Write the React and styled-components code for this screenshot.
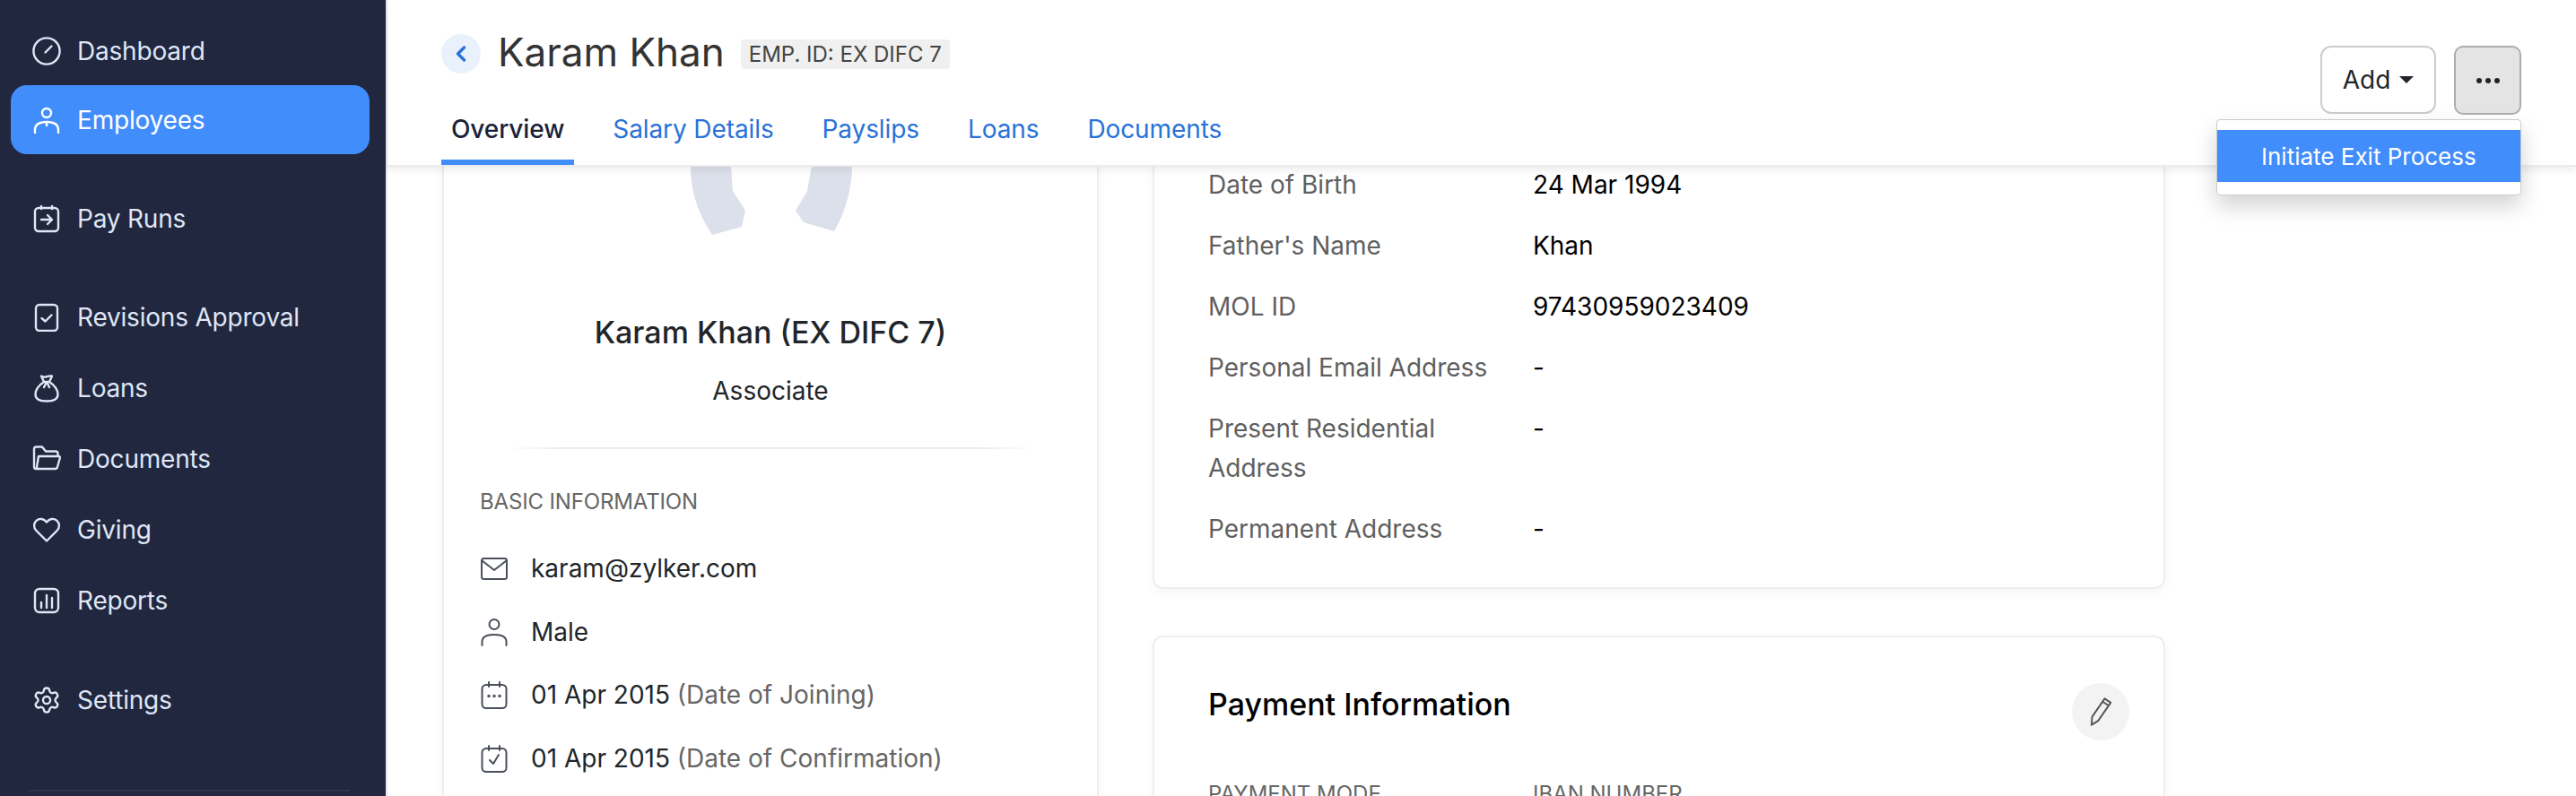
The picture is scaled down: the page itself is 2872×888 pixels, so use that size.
import React from 'react'
import styled, { createGlobalStyle } from 'styled-components'

const GlobalStyle = createGlobalStyle`
  html, body {
    margin: 0;
    padding: 0;
    background: #fff;
    font-family: Inter, "Liberation Sans", sans-serif;
    overflow: hidden;
  }
  * { box-sizing: border-box; }
`

const Icon = ({ children, size = 32, sw = 2.4 }) => (
  <svg width={size} height={size} viewBox="0 0 32 32" fill="none" stroke="currentColor" strokeWidth={sw} strokeLinecap="round" strokeLinejoin="round">
    {children}
  </svg>
)

const icons = {
  dashboard: <><circle cx="16" cy="16" r="14.6" /><path d="M14.500 17.500l7-7" /></>,
  employee: <><circle cx="16" cy="8" r="5" /><path d="M3 30v-3c0-6 5-9 13-9s13 3 13 9v3M16 18v4" /></>,
  payruns: <><rect x="3" y="4" width="26" height="26" rx="4" /><path d="M10 2v3M22 2v3M10 17h11M17 12l5 5-5 5" /></>,
  revisions: <><rect x="4" y="2" width="24" height="29" rx="4" /><path d="M10.500 17l4 3.500 7-7" /></>,
  loans: <><path d="M10 2.500c2 1.200 4 1.500 6 .7 2-.8 4-1 6-.7l-3 6.500h-6zM13 9C7 13 3.500 18 3.500 23c0 5 4 7.500 12.500 7.500S28.500 28 28.500 23c0-5-3.500-10-9.500-14M16 9l-3 6M16 9l3 6" /></>,
  documents: <><path d="M7 27H4c-1.500 0-2-1-2-2V5c0-1.500 1-2.500 2.500-2.500H11l4 5h11c1.500 0 2.500 1 2.500 2.500v2" /><path d="M7 13h22.500c1 0 1.500 1 1.300 2L28 25c-.3 1.300-1 2-2.500 2H6.500C5 27 4.500 26 5 25l2-12z" /></>,
  giving: <path d="M16 28.500L4.500 17C1 13.500 1.500 8.500 4.500 5.800 8 2.700 13 3.500 16 7.500c3-4 8-4.800 11.500-1.700 3 2.700 3.500 7.700 0 11.200z" />,
  reports: <><rect x="3" y="3" width="26" height="26" rx="5" /><path d="M10 18v6M16 10v14M22 13v11" /></>,
  settings: <g transform="translate(-0.3 -0.3) scale(1.36)" strokeWidth="1.75"><circle cx="12" cy="12" r="3" /><path d="M9.671 4.136a2.34 2.34 0 0 1 4.659 0 2.34 2.34 0 0 0 3.319 1.915 2.34 2.34 0 0 1 2.33 4.033 2.34 2.34 0 0 0 0 3.831 2.34 2.34 0 0 1-2.33 4.033 2.34 2.34 0 0 0-3.319 1.915 2.34 2.34 0 0 1-4.659 0 2.34 2.34 0 0 0-3.32-1.915 2.34 2.34 0 0 1-2.33-4.033 2.34 2.34 0 0 0 0-3.831A2.34 2.34 0 0 1 6.35 6.051a2.34 2.34 0 0 0 3.319-1.915" /></g>,
  mail: <><rect x="2" y="5" width="28" height="23" rx="2.500" /><path d="M2.500 7.500L16 18 29.500 7.500" /></>,
  user: <><circle cx="16" cy="7.500" r="5.500" /><path d="M2.500 31v-4c0-5 5-8 13.500-8s13.500 3 13.500 8v4" /></>,
  joining: <><rect x="2.500" y="5" width="27" height="26" rx="4.500" /><path d="M10 2v5M22 2v5" /><circle cx="10" cy="17.500" r=".8" /><circle cx="16" cy="17.500" r=".8" /><circle cx="22" cy="17.500" r=".8" /></>,
  confirm: <><rect x="2.500" y="5" width="27" height="26" rx="4.500" /><path d="M10 2v5M22 2v5M11 18l4 4 6-10" /></>,
  pencil: <path d="M7 29l.6-8L20 3l6 4-12.500 18zM18 6l6 4" />
}

const nav = [
  { row: 77, after: 1, items: [{ icon: 'dashboard', label: 'Dashboard' }, { icon: 'employee', label: 'Employees', active: true }] },
  { row: 77, items: [{ icon: 'payruns', label: 'Pay Runs' }] },
  { row: 79, items: [{ icon: 'revisions', label: 'Revisions Approval' }, { icon: 'loans', label: 'Loans' }, { icon: 'documents', label: 'Documents' }, { icon: 'giving', label: 'Giving' }, { icon: 'reports', label: 'Reports' }] },
  { row: 79, items: [{ icon: 'settings', label: 'Settings' }] }
]

const tabs = ['Overview', 'Salary Details', 'Payslips', 'Loans', 'Documents']

const details = [
  ['Date of Birth', '24 Mar 1994'],
  ["Father's Name", 'Khan'],
  ['MOL ID', '97430959023409'],
  ['Personal Email Address', '-'],
  ['Present Residential Address', '-'],
  ['Permanent Address', '-']
]

const basics = [
  { icon: 'mail', text: 'karam@zylker.com' },
  { icon: 'user', text: 'Male' },
  { icon: 'joining', text: '01 Apr 2015', note: '(Date of Joining)' },
  { icon: 'confirm', text: '01 Apr 2015', note: '(Date of Confirmation)' }
]

const App = () => {
  return (
    <Page>
      <GlobalStyle />
      <Sidebar>
        {nav.map((group, i) => (
          <NavGroup key={i} $row={group.row} $after={group.after}>
            {group.items.map(item => (
              <NavItem key={item.label} $active={item.active}>
                <Icon>{icons[item.icon]}</Icon>
                {item.label}
              </NavItem>
            ))}
          </NavGroup>
        ))}
        <SideRule />
      </Sidebar>

      <Main>
        <Header>
          <HeaderLeft>
            <TitleRow>
              <BackButton>
                <svg width="14" height="20" viewBox="0 0 14 20" fill="none" stroke="currentColor" strokeWidth="3.4" strokeLinecap="round" strokeLinejoin="round"><path d="M10.500 3L3.500 10l7 7" /></svg>
              </BackButton>
              <Title>Karam Khan</Title>
              <Badge>EMP. ID: EX DIFC 7</Badge>
            </TitleRow>
            <Tabs>
              {tabs.map((t, i) => <Tab key={t} $active={i === 0}>{t}</Tab>)}
            </Tabs>
          </HeaderLeft>
          <Actions>
            <AddButton>Add<Caret /></AddButton>
            <MoreButton>
              <svg width="28" height="8" viewBox="0 0 28 8" fill="currentColor"><circle cx="4" cy="4" r="3" /><circle cx="14" cy="4" r="3" /><circle cx="24" cy="4" r="3" /></svg>
            </MoreButton>
            <Menu>
              <MenuItem>Initiate Exit Process</MenuItem>
            </Menu>
          </Actions>
        </Header>

        <Scroller>
          <Columns>
            <ProfileCard>
              <Avatar>
                <svg width="200" height="80" viewBox="0 0 200 80" fill="#dbe0ea">
                  <path d="M11 0C10 28 20 56 35 78L68 69 72 51 58 29 56 0Z" />
                  <path d="M146 0L141 29 128 51 137 64 171 74C184 52 191 26 191 0Z" />
                </svg>
              </Avatar>
              <ProfileName>Karam Khan (EX DIFC 7)</ProfileName>
              <ProfileRole>Associate</ProfileRole>
              <FadeRule />
              <SectionLabel>BASIC INFORMATION</SectionLabel>
              <BasicList>
                {basics.map((b, i) => (
                  <BasicRow key={i}>
                    <BasicIcon><Icon size={32} sw={2}>{icons[b.icon]}</Icon></BasicIcon>
                    <span>{b.text}{b.note && <Muted> {b.note}</Muted>}</span>
                  </BasicRow>
                ))}
              </BasicList>
            </ProfileCard>

            <RightColumn>
              <DetailCard>
                <DetailGrid>
                  {details.map(([label, value]) => (
                    <React.Fragment key={label}>
                      <DetailLabel>{label}</DetailLabel>
                      <DetailValue>{value}</DetailValue>
                    </React.Fragment>
                  ))}
                </DetailGrid>
              </DetailCard>
              <PaymentCard>
                <PaymentHead>
                  <PaymentTitle>Payment Information</PaymentTitle>
                  <EditButton><Icon size={36} sw={1.7}>{icons.pencil}</Icon></EditButton>
                </PaymentHead>
                <PaymentCols>
                  <span>PAYMENT MODE</span>
                  <span>IBAN NUMBER</span>
                </PaymentCols>
              </PaymentCard>
            </RightColumn>
          </Columns>
        </Scroller>
      </Main>
    </Page>
  )
}

const Page = styled.div`
  display: flex;
  width: 2872px;
  height: 888px;
  overflow: hidden;
  background: #fff;
`

const Sidebar = styled.aside`
  width: 432px;
  flex-shrink: 0;
  height: 888px;
  padding-top: 18px;
  background: #21273e;
  border-right: 2px solid #e6e6ec;
  display: flex;
  flex-direction: column;
  gap: 32px;
`

const NavGroup = styled.div`
  display: grid;
  grid-auto-rows: ${p => p.$row}px;
  margin-bottom: ${p => p.$after || 0}px;
`

const NavItem = styled.div`
  display: flex;
  align-items: center;
  gap: 18px;
  margin: 0 18px 0 12px;
  padding-left: 24px;
  border-radius: 18px;
  font-size: 28px;
  letter-spacing: -0.2px;
  color: ${p => (p.$active ? '#fff' : '#dfe6f6')};
  background: ${p => (p.$active ? '#428dfc' : 'transparent')};
`

const SideRule = styled.div`
  height: 2px;
  margin: 29px 40px 0 32px;
  background: #2f3450;
`

const Main = styled.main`
  flex: 1;
  min-width: 0;
  display: flex;
  flex-direction: column;
`

const Header = styled.header`
  position: relative;
  z-index: 2;
  height: 186px;
  flex-shrink: 0;
  display: flex;
  justify-content: space-between;
  padding: 0 61px 0 60px;
  background: #fff;
  border-bottom: 2px solid #ececec;
  box-shadow: 0 4px 8px rgba(0, 0, 0, 0.07);
`

const HeaderLeft = styled.div`
  display: flex;
  flex-direction: column;
  justify-content: space-between;
  padding-top: 38px;
`

const TitleRow = styled.div`
  display: flex;
  align-items: center;
  height: 44px;
`

const BackButton = styled.div`
  width: 44px;
  height: 44px;
  border-radius: 50%;
  display: flex;
  align-items: center;
  justify-content: center;
  background: #e9f1fc;
  color: #2872d8;
`

const Title = styled.h1`
  margin: 0 18px 0 19px;
  padding-bottom: 5px;
  font-size: 44px;
  line-height: 44px;
  font-weight: 400;
  color: #333;
`

const Badge = styled.span`
  height: 33px;
  padding: 0 9px;
  display: flex;
  align-items: center;
  border-radius: 4px;
  background: #f0f0f0;
  font-size: 24px;
  color: #444;
`

const Tabs = styled.nav`
  display: flex;
  gap: 32px;
`

const Tab = styled.div`
  height: 62px;
  padding: 0 11px 12px;
  display: flex;
  align-items: center;
  font-size: 28px;
  letter-spacing: -0.1px;
  font-weight: ${p => (p.$active ? 500 : 400)};
  color: ${p => (p.$active ? '#1b2238' : '#2872d8')};
  border-bottom: 6px solid ${p => (p.$active ? '#428dfc' : 'transparent')};
`

const Actions = styled.div`
  position: relative;
  display: flex;
  gap: 20px;
  padding-top: 51px;
`

const AddButton = styled.button`
  width: 129px;
  height: 76px;
  display: flex;
  align-items: center;
  justify-content: center;
  gap: 10px;
  background: #fff;
  border: 2px solid #ccc;
  border-radius: 12px;
  font: 400 28px Inter, sans-serif;
  color: #212529;
`

const Caret = styled.span`
  width: 0;
  height: 0;
  border-left: 8px solid transparent;
  border-right: 8px solid transparent;
  border-top: 8px solid #212529;
`

const MoreButton = styled.button`
  width: 75px;
  height: 77px;
  display: flex;
  align-items: center;
  justify-content: center;
  background: #e4e4e4;
  border: 2px solid #adadad;
  border-radius: 10px;
  color: #212529;
`

const Menu = styled.div`
  position: absolute;
  top: 133px;
  right: 0;
  width: 340px;
  height: 85px;
  padding-top: 11px;
  background: #fff;
  border: 1.5px solid #ccc;
  border-radius: 4px;
  box-shadow: 0 12px 24px rgba(0, 0, 0, 0.175);
`

const MenuItem = styled.div`
  height: 58px;
  padding-left: 49px;
  display: flex;
  align-items: center;
  background: #428dfc;
  color: #fff;
  font-size: 26px;
`

const Scroller = styled.div`
  flex: 1;
  min-height: 0;
  overflow: hidden;
`

const Columns = styled.div`
  display: flex;
  align-items: flex-start;
  gap: 60px;
  margin-top: -62px;
  padding-left: 61px;
`

const Card = styled.section`
  background: #fff;
  border: 2px solid #eeeeee;
  border-radius: 12px;
  box-shadow: 0 4px 12px rgba(0, 0, 0, 0.04);
`

const ProfileCard = styled(Card)`
  width: 732px;
  height: 900px;
  padding: 58px 40px 0;
`

const Avatar = styled.div`
  display: flex;
  justify-content: center;
`

const ProfileName = styled.div`
  margin-top: 85px;
  text-align: center;
  font-size: 34px;
  line-height: 44px;
  font-weight: 500;
  color: #212529;
`

const ProfileRole = styled.div`
  margin-top: 23px;
  text-align: center;
  font-size: 28px;
  line-height: 40px;
  color: #212529;
`

const FadeRule = styled.div`
  height: 2px;
  margin: 43px 30px 0;
  background: linear-gradient(90deg, transparent, #ececec 10%, #ececec 90%, transparent);
`

const SectionLabel = styled.div`
  margin-top: 41px;
  font-size: 24px;
  line-height: 36px;
  letter-spacing: -0.15px;
  color: #666;
`

const BasicList = styled.div`
  margin-top: 34px;
  display: flex;
  flex-direction: column;
  gap: 26.5px;
`

const BasicRow = styled.div`
  display: flex;
  align-items: center;
  gap: 25px;
  height: 44px;
  font-size: 28px;
  color: #212529;
`

const BasicIcon = styled.span`
  display: flex;
  color: #4a4f5c;
`

const Muted = styled.span`
  color: #666;
`

const RightColumn = styled.div`
  width: 1129px;
  display: flex;
  flex-direction: column;
  gap: 52px;
`

const DetailCard = styled(Card)`
  padding: 58px 60px 43px;
`

const DetailGrid = styled.div`
  display: grid;
  grid-template-columns: 362px 1fr;
  row-gap: 24px;
`

const DetailLabel = styled.div`
  max-width: 345px;
  font-size: 28px;
  line-height: 44px;
  color: #5f5f5f;
`

const DetailValue = styled.div`
  font-size: 28px;
  line-height: 44px;
  color: #000;
`

const PaymentCard = styled(Card)`
  height: 300px;
  padding: 51px 38px 0 60px;
`

const PaymentHead = styled.div`
  display: flex;
  justify-content: space-between;
`

const PaymentTitle = styled.h2`
  margin: 0;
  font-size: 34px;
  line-height: 48px;
  font-weight: 500;
  color: #000;
`

const EditButton = styled.div`
  width: 64px;
  height: 64px;
  border-radius: 50%;
  display: flex;
  align-items: center;
  justify-content: center;
  background: #f3f3f3;
  color: #555;
`

const PaymentCols = styled.div`
  margin-top: 42px;
  display: grid;
  grid-template-columns: 362px 1fr;
  font-size: 24px;
  line-height: 36px;
  color: #666;
`

export default App
